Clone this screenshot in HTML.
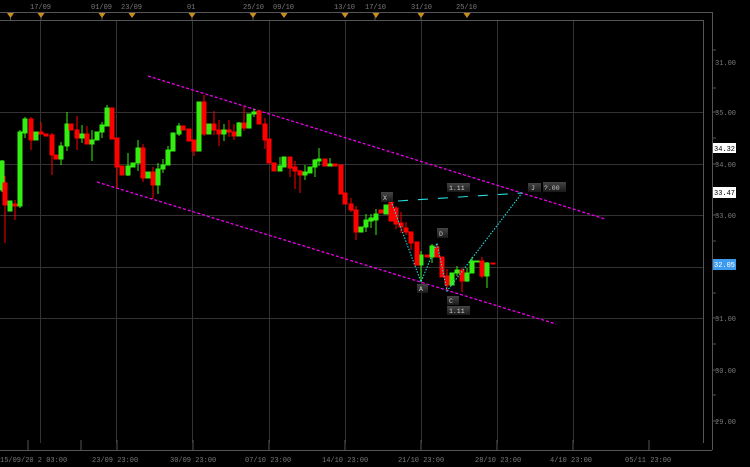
<!DOCTYPE html>
<html><head><meta charset="utf-8"><style>
html,body{margin:0;padding:0;background:#000;}
body{width:750px;height:467px;overflow:hidden;position:relative;font-family:"Liberation Mono",monospace;}
svg{position:absolute;left:0;top:0}
.t{font-family:"Liberation Mono",monospace;font-size:7px;fill:#7a7a7a}
.b{font-family:"Liberation Mono",monospace;font-size:6.5px;fill:#ccc}
</style></head><body>
<svg width="750" height="467" viewBox="0 0 750 467" xmlns="http://www.w3.org/2000/svg">
<defs><linearGradient id="g" x1="0" y1="0" x2="0" y2="1"><stop offset="0" stop-color="#444"/><stop offset="1" stop-color="#1a1a1a"/></linearGradient></defs>
<g stroke="#333" stroke-width="1">
<line x1="40.5" y1="20" x2="40.5" y2="443"/><line x1="116.5" y1="20" x2="116.5" y2="443"/><line x1="192.5" y1="20" x2="192.5" y2="443"/><line x1="269.5" y1="20" x2="269.5" y2="443"/><line x1="345.5" y1="20" x2="345.5" y2="443"/><line x1="421.5" y1="20" x2="421.5" y2="443"/><line x1="497.5" y1="20" x2="497.5" y2="443"/><line x1="573.5" y1="20" x2="573.5" y2="443"/>
<line x1="0" y1="112.5" x2="703" y2="112.5"/><line x1="0" y1="164.5" x2="703" y2="164.5"/><line x1="0" y1="215.5" x2="703" y2="215.5"/><line x1="0" y1="267.5" x2="703" y2="267.5"/><line x1="0" y1="318.5" x2="703" y2="318.5"/>
</g>
<g stroke="#555" stroke-width="1" fill="none">
<line x1="0" y1="12.5" x2="712" y2="12.5"/><line x1="0" y1="20.5" x2="703" y2="20.5"/>
<line x1="703.5" y1="20" x2="703.5" y2="443"/><line x1="712.5" y1="12" x2="712.5" y2="450"/>
<line x1="0" y1="450.5" x2="712" y2="450.5"/>
</g>
<g stroke="#555">
<line x1="10.5" y1="12" x2="10.5" y2="20"/><line x1="41" y1="12" x2="41" y2="20"/><line x1="102" y1="12" x2="102" y2="20"/><line x1="192" y1="12" x2="192" y2="20"/><line x1="253" y1="12" x2="253" y2="20"/><line x1="375" y1="12" x2="375" y2="20"/><line x1="421" y1="12" x2="421" y2="20"/>
<line x1="28" y1="440" x2="28" y2="450"/><line x1="81" y1="440" x2="81" y2="450"/><line x1="117" y1="440" x2="117" y2="450"/><line x1="193" y1="440" x2="193" y2="450"/><line x1="269" y1="440" x2="269" y2="450"/><line x1="345" y1="440" x2="345" y2="450"/><line x1="421" y1="440" x2="421" y2="450"/><line x1="497" y1="440" x2="497" y2="450"/><line x1="573" y1="440" x2="573" y2="450"/><line x1="649" y1="440" x2="649" y2="450"/>
<line x1="712" y1="50" x2="716" y2="50"/><line x1="712" y1="88" x2="716" y2="88"/><line x1="712" y1="112" x2="718" y2="112"/><line x1="712" y1="138" x2="716" y2="138"/><line x1="712" y1="164" x2="718" y2="164"/><line x1="712" y1="190" x2="716" y2="190"/><line x1="712" y1="215" x2="718" y2="215"/><line x1="712" y1="241" x2="716" y2="241"/><line x1="712" y1="267" x2="718" y2="267"/><line x1="712" y1="293" x2="716" y2="293"/><line x1="712" y1="318" x2="718" y2="318"/><line x1="712" y1="344" x2="716" y2="344"/><line x1="712" y1="370" x2="718" y2="370"/><line x1="712" y1="395" x2="716" y2="395"/><line x1="712" y1="421" x2="718" y2="421"/>
</g>
<g fill="#c8901a">
<polygon points="7,13 14,13 10.5,18"/><polygon points="37.5,13 44.5,13 41,18"/><polygon points="98.5,13 105.5,13 102,18"/><polygon points="128.5,13 135.5,13 132,18"/><polygon points="188.5,13 195.5,13 192,18"/><polygon points="249.5,13 256.5,13 253,18"/><polygon points="280.5,13 287.5,13 284,18"/><polygon points="341.5,13 348.5,13 345,18"/><polygon points="372.5,13 379.5,13 376,18"/><polygon points="417.5,13 424.5,13 421,18"/><polygon points="463.5,13 470.5,13 467,18"/>
</g>
<g class="t">
<text x="30" y="9">17/09</text><text x="91" y="9">01/09</text><text x="121" y="9">23/09</text><text x="187" y="9">01</text><text x="243" y="9">25/10</text><text x="273" y="9">09/10</text><text x="334" y="9">13/10</text><text x="365" y="9">17/10</text><text x="411" y="9">31/10</text><text x="456" y="9">25/10</text>
<text x="715" y="65">31.00</text><text x="715" y="115">35.00</text><text x="715" y="167">34.00</text><text x="715" y="218">33.00</text><text x="715" y="321">31.00</text><text x="715" y="373">30.00</text><text x="715" y="424">29.00</text>
<text x="0" y="462">15/09/20 2 03:00</text><text x="92" y="462">23/09 23:00</text><text x="170" y="462">30/09 23:00</text><text x="245" y="462">07/10 23:00</text><text x="322" y="462">14/10 23:00</text><text x="398" y="462">21/10 23:00</text><text x="475" y="462">28/10 23:00</text><text x="550" y="462">4/10 23:00</text><text x="625" y="462">05/11 23:00</text>
</g>
<rect x="713" y="143" width="23" height="10" fill="#fff"/><text x="714" y="151" style="font-family:Liberation Mono;font-size:7px;fill:#000">34.32</text>
<rect x="713" y="187" width="23" height="11" fill="#fff"/><text x="714" y="195" style="font-family:Liberation Mono;font-size:7px;fill:#000">33.47</text>
<rect x="713" y="259" width="23" height="11" fill="#3d9cf0"/><text x="714" y="267" style="font-family:Liberation Mono;font-size:7px;fill:#fff">32.05</text>
<g stroke="#ee00ee" stroke-width="1.3" stroke-dasharray="3,2">
<line x1="148" y1="76" x2="605" y2="219"/><line x1="97" y1="182" x2="556" y2="324"/>
</g>
<g id="c">
<g stroke="#33ee11" fill="#33ee11">
<line x1="2" y1="160" x2="2" y2="192"/><rect x="0" y="161" width="4" height="29"/>
<rect x="8" y="201" width="4" height="10"/>
<line x1="20" y1="130" x2="20" y2="208"/><rect x="18" y="132" width="4" height="74"/>
<line x1="25" y1="117" x2="25" y2="138"/><rect x="23" y="119" width="4" height="14"/>
<rect x="34" y="132" width="4" height="8"/>
<line x1="61" y1="142" x2="61" y2="165"/><rect x="59" y="146" width="4" height="13"/>
<line x1="67" y1="112" x2="67" y2="151"/><rect x="65" y="124" width="4" height="22"/>
<line x1="82" y1="125" x2="82" y2="143"/><rect x="80" y="134" width="4" height="4"/>
<line x1="92" y1="130" x2="92" y2="161"/><rect x="90" y="140" width="4" height="4"/>
<rect x="95" y="132" width="4" height="8"/>
<line x1="102" y1="122" x2="102" y2="138"/><rect x="100" y="125" width="4" height="7"/>
<line x1="107" y1="105" x2="107" y2="126"/><rect x="105" y="108" width="4" height="18"/>
<line x1="128" y1="153" x2="128" y2="176"/><rect x="126" y="166" width="4" height="9"/>
<rect x="131" y="163" width="4" height="4"/>
<line x1="138" y1="140" x2="138" y2="171"/><rect x="136" y="148" width="4" height="15"/>
<rect x="146" y="172" width="4" height="6"/>
<line x1="158" y1="163" x2="158" y2="194"/><rect x="156" y="169" width="4" height="16"/>
<line x1="163" y1="159" x2="163" y2="173"/><rect x="161" y="165" width="4" height="4"/>
<line x1="168" y1="146" x2="168" y2="165"/><rect x="166" y="150" width="4" height="15"/>
<rect x="171" y="133" width="4" height="18"/>
<line x1="179" y1="123" x2="179" y2="136"/><rect x="177" y="126" width="4" height="8"/>
<rect x="197" y="102" width="4" height="49"/>
<rect x="207" y="124" width="4" height="10"/>
<line x1="224" y1="124" x2="224" y2="141"/><rect x="222" y="130" width="4" height="4"/>
<line x1="239" y1="122" x2="239" y2="136"/><rect x="237" y="123" width="4" height="13"/>
<rect x="247" y="114" width="4" height="14"/>
<line x1="254" y1="109" x2="254" y2="117"/><rect x="252" y="112" width="4" height="2"/>
<line x1="280" y1="157" x2="280" y2="171"/><rect x="278" y="166" width="4" height="5"/>
<rect x="282" y="157" width="4" height="10"/>
<line x1="305" y1="165" x2="305" y2="180"/><rect x="303" y="172" width="4" height="3"/>
<rect x="308" y="167" width="4" height="6"/>
<line x1="315" y1="159" x2="315" y2="177"/><rect x="313" y="160" width="4" height="7"/>
<line x1="319" y1="148" x2="319" y2="166"/><rect x="317" y="159" width="4" height="2"/>
<line x1="330" y1="158" x2="330" y2="166"/><rect x="328" y="164" width="4" height="2"/>
<rect x="359" y="227" width="4" height="5"/>
<line x1="366" y1="214" x2="366" y2="232"/><rect x="364" y="220" width="4" height="7"/>
<line x1="371" y1="214" x2="371" y2="228"/><rect x="369" y="218" width="4" height="3"/>
<line x1="376" y1="209" x2="376" y2="235"/><rect x="374" y="214" width="4" height="6"/>
<rect x="384" y="205" width="4" height="9"/>
<line x1="421" y1="251" x2="421" y2="282"/><rect x="419" y="255" width="4" height="10"/>
<line x1="432" y1="244" x2="432" y2="263"/><rect x="430" y="246" width="4" height="11"/>
<rect x="450" y="273" width="4" height="12"/>
<line x1="457" y1="266" x2="457" y2="276"/><rect x="455" y="270" width="4" height="3"/>
<line x1="467" y1="268" x2="467" y2="282"/><rect x="465" y="273" width="4" height="8"/>
<line x1="472" y1="257" x2="472" y2="273"/><rect x="470" y="261" width="4" height="12"/>
<rect x="475" y="261" width="4" height="1"/>
<line x1="487" y1="262" x2="487" y2="288"/><rect x="485" y="263" width="4" height="13"/>
</g>
<g stroke="#ff0000" fill="#ff0000">
<line x1="5" y1="176" x2="5" y2="243"/><rect x="3" y="183" width="4" height="22"/>
<line x1="15" y1="200" x2="15" y2="220"/><rect x="13" y="204" width="4" height="2"/>
<line x1="31" y1="117" x2="31" y2="150"/><rect x="29" y="119" width="4" height="21"/>
<line x1="41" y1="122" x2="41" y2="134"/><rect x="39" y="132" width="4" height="2"/>
<rect x="44" y="134" width="4" height="2"/>
<line x1="52" y1="133" x2="52" y2="175"/><rect x="50" y="135" width="4" height="20"/>
<rect x="54" y="155" width="4" height="4"/>
<rect x="69" y="124" width="4" height="6"/>
<line x1="77" y1="116" x2="77" y2="150"/><rect x="75" y="130" width="4" height="8"/>
<line x1="87" y1="126" x2="87" y2="144"/><rect x="85" y="134" width="4" height="10"/>
<rect x="110" y="108" width="4" height="31"/>
<line x1="117" y1="138" x2="117" y2="188"/><rect x="115" y="138" width="4" height="29"/>
<rect x="120" y="166" width="4" height="9"/>
<line x1="143" y1="144" x2="143" y2="182"/><rect x="141" y="148" width="4" height="30"/>
<line x1="153" y1="167" x2="153" y2="199"/><rect x="151" y="172" width="4" height="13"/>
<rect x="181" y="126" width="4" height="4"/>
<rect x="187" y="129" width="4" height="12"/>
<line x1="194" y1="140" x2="194" y2="156"/><rect x="192" y="140" width="4" height="11"/>
<line x1="204" y1="95" x2="204" y2="136"/><rect x="202" y="102" width="4" height="32"/>
<line x1="214" y1="111" x2="214" y2="135"/><rect x="212" y="124" width="4" height="6"/>
<line x1="219" y1="120" x2="219" y2="146"/><rect x="217" y="130" width="4" height="4"/>
<line x1="229" y1="120" x2="229" y2="137"/><rect x="227" y="130" width="4" height="2"/>
<line x1="234" y1="124" x2="234" y2="140"/><rect x="232" y="132" width="4" height="4"/>
<line x1="244" y1="107" x2="244" y2="131"/><rect x="242" y="123" width="4" height="5"/>
<rect x="257" y="111" width="4" height="13"/>
<line x1="265" y1="118" x2="265" y2="149"/><rect x="263" y="124" width="4" height="16"/>
<rect x="267" y="139" width="4" height="24"/>
<rect x="272" y="163" width="4" height="8"/>
<line x1="290" y1="157" x2="290" y2="177"/><rect x="288" y="157" width="4" height="11"/>
<line x1="295" y1="161" x2="295" y2="189"/><rect x="293" y="167" width="4" height="4"/>
<line x1="300" y1="170" x2="300" y2="193"/><rect x="298" y="171" width="4" height="4"/>
<rect x="323" y="159" width="4" height="7"/>
<rect x="333" y="164" width="4" height="2"/>
<rect x="339" y="165" width="4" height="29"/>
<rect x="343" y="193" width="4" height="11"/>
<line x1="351" y1="198" x2="351" y2="212"/><rect x="349" y="204" width="4" height="6"/>
<line x1="356" y1="206" x2="356" y2="240"/><rect x="354" y="210" width="4" height="22"/>
<rect x="379" y="210" width="4" height="3"/>
<line x1="391" y1="202" x2="391" y2="221"/><rect x="389" y="202" width="4" height="19"/>
<line x1="396" y1="206" x2="396" y2="229"/><rect x="394" y="208" width="4" height="16"/>
<line x1="401" y1="212" x2="401" y2="233"/><rect x="399" y="223" width="4" height="4"/>
<line x1="406" y1="222" x2="406" y2="235"/><rect x="404" y="228" width="4" height="4"/>
<line x1="411" y1="232" x2="411" y2="250"/><rect x="409" y="232" width="4" height="11"/>
<rect x="415" y="242" width="4" height="23"/>
<rect x="425" y="255" width="4" height="2"/>
<line x1="437" y1="244" x2="437" y2="257"/><rect x="435" y="247" width="4" height="10"/>
<rect x="440" y="257" width="4" height="20"/>
<line x1="447" y1="269" x2="447" y2="290"/><rect x="445" y="276" width="4" height="9"/>
<line x1="462" y1="268" x2="462" y2="292"/><rect x="460" y="270" width="4" height="11"/>
<line x1="482" y1="257" x2="482" y2="278"/><rect x="480" y="261" width="4" height="15"/>
<rect x="491" y="263" width="4" height="1"/>
</g>
</g>
<g stroke="#22dddd" stroke-width="1.1" stroke-dasharray="1.5,1.5" fill="none">
<polyline points="391,201 421,282 437,243 447,291 522,193"/>
<line x1="398" y1="201" x2="522" y2="193" stroke-dasharray="10,10"/>
</g>
<g>
<rect x="381" y="192" width="12" height="10" fill="url(#g)"/><text x="383" y="200" class="b">X</text>
<rect x="447" y="183" width="23" height="9" fill="url(#g)"/><text x="449" y="190" class="b">1.11</text>
<rect x="528" y="183" width="13" height="9" fill="url(#g)"/><text x="531" y="190" class="b">J</text>
<rect x="543" y="182" width="23" height="10" fill="url(#g)"/><text x="544" y="190" class="b">?.00</text>
<rect x="437" y="228" width="11" height="10" fill="url(#g)"/><text x="439" y="236" class="b">D</text>
<rect x="417" y="284" width="11" height="9" fill="url(#g)"/><text x="419" y="291" class="b">A</text>
<rect x="447" y="296" width="12" height="9" fill="url(#g)"/><text x="449" y="303" class="b">C</text>
<rect x="447" y="306" width="23" height="9" fill="url(#g)"/><text x="449" y="313" class="b">1.11</text>
</g>
</svg>
</body></html>
